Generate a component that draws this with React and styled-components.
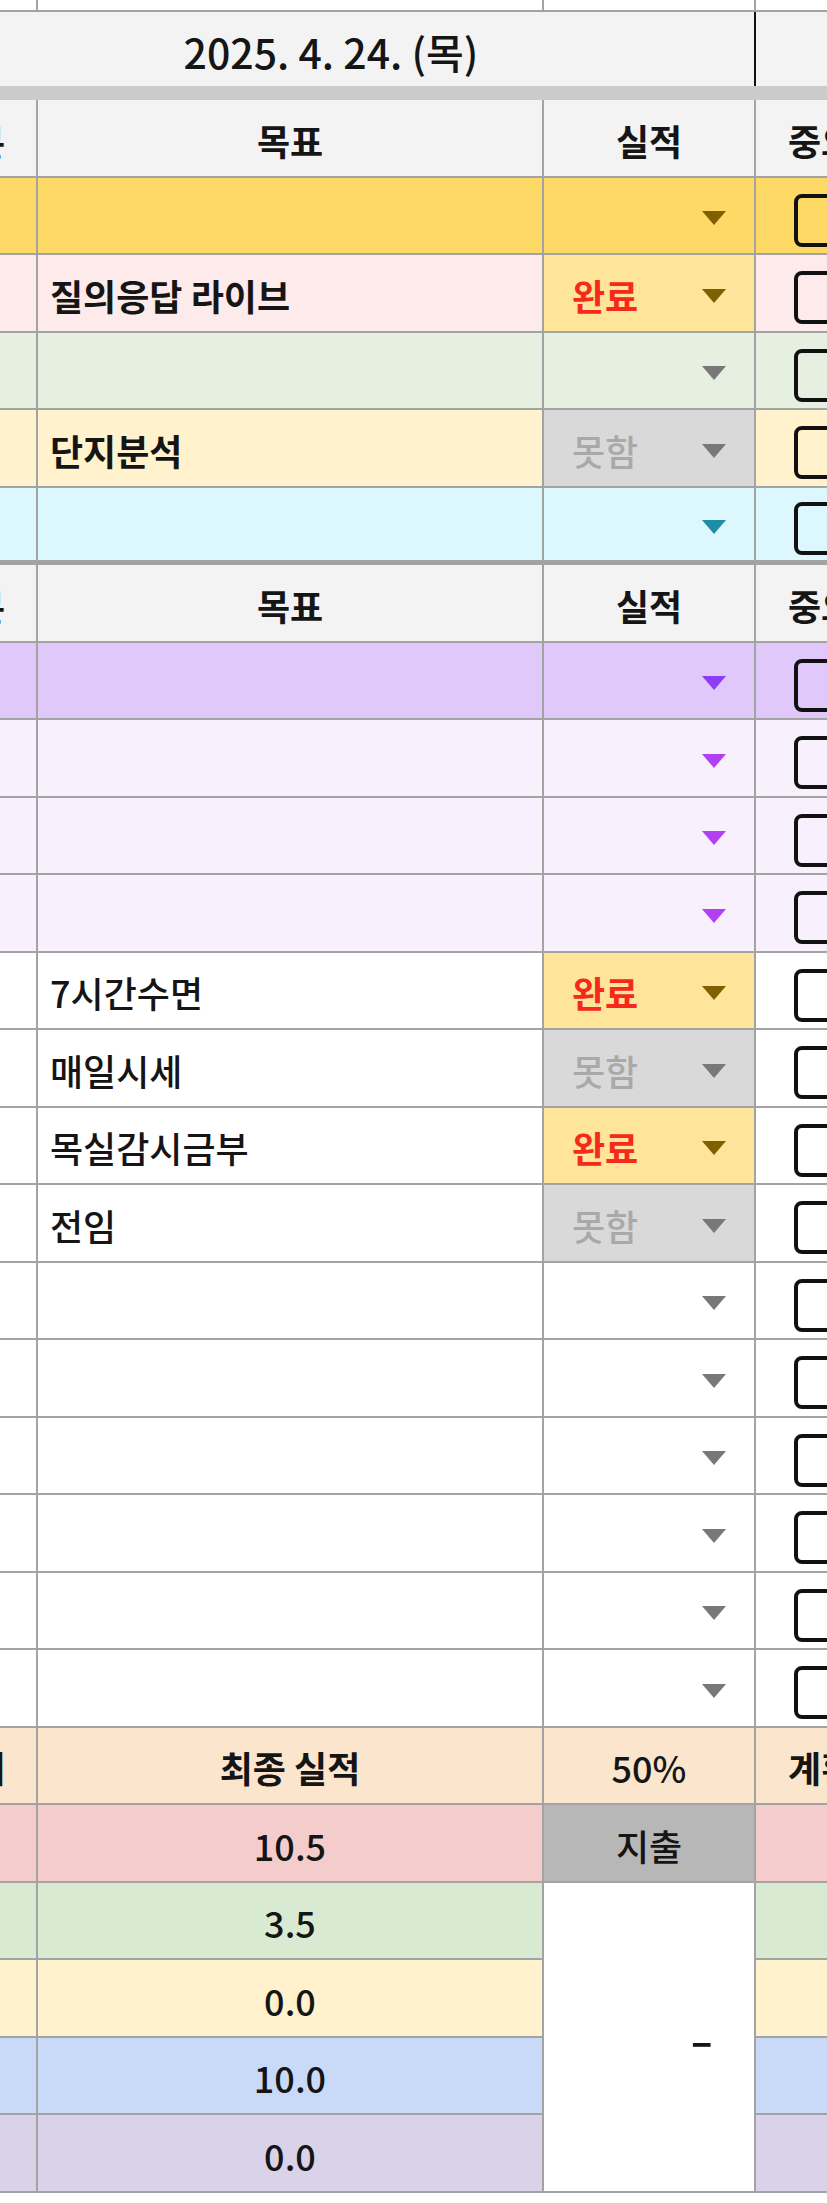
import React from 'react';
import styled, { createGlobalStyle } from 'styled-components';

const GlobalStyle = createGlobalStyle`
  html, body {
    margin: 0;
    padding: 0;
    background: #fff;
  }
  body {
    font-family: "Noto Sans CJK KR", "Noto Sans", sans-serif;
    overflow: hidden;
  }
`;

const LINE = '#a3a3a3';
const COLS = '130px 506px 212px 132px';

const Page = styled.div`
  width: 827px;
  height: 2203px;
  overflow: hidden;
  background: #fff;
`;

// the sheet is wider than the window: the first and last columns are cut off
const Sheet = styled.div`
  margin-left: -92px;
  width: 980px;
`;

const Grid = styled.div`
  display: grid;
  grid-template-columns: ${COLS};
  grid-auto-rows: ${p => p.$row || '77.5px'};
`;

const Cell = styled.div`
  box-sizing: border-box;
  display: flex;
  align-items: center;
  justify-content: ${p => (p.$align === 'left' ? 'flex-start' : p.$align === 'right' ? 'flex-end' : 'center')};
  padding: ${p => p.$pad || '0'};
  grid-column: span ${p => p.$span || 1};
  grid-row: span ${p => p.$rows || 1};
  background: ${p => p.$bg || '#fff'};
  border-right: 2px solid ${p => p.$edge || LINE};
  border-bottom: ${p => (p.$thick ? 5 : 2)}px solid ${LINE};
  font-size: ${p => p.$size || 36}px;
  font-weight: ${p => (p.$bold ? 700 : 500)};
  color: ${p => p.$color || '#151515'};
  line-height: 1;
  white-space: nowrap;
  overflow: hidden;
`;

const Text = styled.span`
  padding-top: 4px;
`;

const Dash = styled.span`
  display: inline-block;
  padding-top: 4px;
  transform: scaleX(1.8);
  font-weight: 700;
`;

const Band = styled.div`
  height: 14px;
  background: #cbcbcb;
`;

const StatusCell = styled(Cell)`
  justify-content: space-between;
  padding: 0 28px;
`;

const Arrow = styled.span`
  width: 0;
  height: 0;
  margin-left: auto;
  margin-top: 6px;
  border-left: 12px solid transparent;
  border-right: 12px solid transparent;
  border-top: 14px solid ${p => p.$color || '#777'};
`;

const Box = styled.span`
  box-sizing: border-box;
  width: 54px;
  height: 53px;
  margin-top: 10px;
  border: 4px solid #111;
  border-radius: 8px;
`;

const ARROW = {
  olive: '#7f6000',
  gray: '#787878',
  teal: '#1d8ea6',
  violet: '#8b3ef5',
  magenta: '#b23ff2',
};

const DONE = { text: '완료', bg: '#ffe599', color: '#f5291c', bold: true, arrow: ARROW.olive };
const MISS = { text: '못함', bg: '#d9d9d9', color: '#a9a9a9', bold: false, arrow: ARROW.gray };

const topRows = [
  { bg: '#ffd966', arrow: ARROW.olive },
  { bg: '#fdeaea', goal: '질의응답 라이브', status: DONE },
  { bg: '#e6f0e0', arrow: ARROW.gray },
  { bg: '#fff2cc', goal: '단지분석', status: MISS },
  { bg: '#ddf7ff', arrow: ARROW.teal, thick: true },
];

const lowerRows = [
  { bg: '#e0c8fb', arrow: ARROW.violet },
  { bg: '#f9f0fd', arrow: ARROW.magenta },
  { bg: '#f9f0fd', arrow: ARROW.magenta },
  { bg: '#f9f0fd', arrow: ARROW.magenta },
  { goal: '7시간수면', status: DONE, light: true },
  { goal: '매일시세', status: MISS, light: true },
  { goal: '목실감시금부', status: DONE, light: true },
  { goal: '전임', status: MISS, light: true },
  {}, {}, {}, {}, {}, {},
];

const totals = [
  { bg: '#f4cccc', value: '10.5' },
  { bg: '#d9ead3', value: '3.5' },
  { bg: '#fff2cc', value: '0.0' },
  { bg: '#c9daf8', value: '10.0' },
  { bg: '#d9d2e9', value: '0.0' },
];

function Header() {
  return (
    <>
      <Cell $bg="#f3f3f3" $bold><Text>구분</Text></Cell>
      <Cell $bg="#f3f3f3" $bold><Text>목표</Text></Cell>
      <Cell $bg="#f3f3f3" $bold><Text>실적</Text></Cell>
      <Cell $bg="#f3f3f3" $bold><Text>중요</Text></Cell>
    </>
  );
}

function TaskRow({ row }) {
  const bg = row.bg || '#fff';
  const status = row.status;
  return (
    <>
      <Cell $bg={bg} $thick={row.thick} />
      <Cell $bg={bg} $thick={row.thick} $align="left" $pad="0 0 0 12px" $bold={!row.light}>
        {row.goal && <Text>{row.goal}</Text>}
      </Cell>
      <StatusCell
        $bg={status ? status.bg : bg}
        $thick={row.thick}
        $color={status && status.color}
        $bold={status && status.bold}
      >
        {status && <Text>{status.text}</Text>}
        <Arrow $color={status ? status.arrow : row.arrow || ARROW.gray} />
      </StatusCell>
      <Cell $bg={bg} $thick={row.thick}>
        <Box />
      </Cell>
    </>
  );
}

function Summary() {
  return (
    <Grid>
      <Cell $bg="#fce5cd" $bold><Text>합계</Text></Cell>
      <Cell $bg="#fce5cd" $bold><Text>최종 실적</Text></Cell>
      <Cell $bg="#fce5cd"><Text>50%</Text></Cell>
      <Cell $bg="#fce5cd" $bold><Text>계획</Text></Cell>
      {totals.map((t, i) => (
        <React.Fragment key={i}>
          <Cell $bg={t.bg} />
          <Cell $bg={t.bg}><Text>{t.value}</Text></Cell>
          {i === 0 && <Cell $bg="#b7b7b7"><Text>지출</Text></Cell>}
          {i === 1 && (
            <Cell $rows={4} $align="right" $pad="0 46px 0 0">
              <Dash>-</Dash>
            </Cell>
          )}
          <Cell $bg={t.bg} />
        </React.Fragment>
      ))}
    </Grid>
  );
}

export default function App() {
  return (
    <Page>
      <GlobalStyle />
      <Sheet>
        <Grid $row="12px">
          <Cell />
          <Cell />
          <Cell />
          <Cell />
        </Grid>
        <Grid $row="74px">
          <Cell $span={3} $bg="#f3f3f3" $size={41} $edge="#111" style={{ borderBottom: 'none' }}>
            <Text>2025. 4. 24. (목)</Text>
          </Cell>
          <Cell $bg="#f3f3f3" style={{ borderBottom: 'none' }} />
        </Grid>
        <Band />
        <Grid>
          <Header />
          {topRows.map((r, i) => <TaskRow key={'t' + i} row={r} />)}
          <Header />
          {lowerRows.map((r, i) => <TaskRow key={'l' + i} row={r} />)}
        </Grid>
        <Summary />
      </Sheet>
    </Page>
  );
}
